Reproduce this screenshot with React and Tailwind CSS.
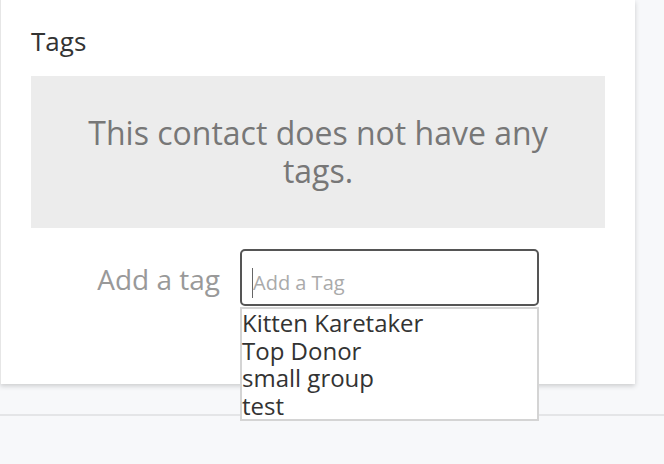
export default function App() {
  const tags = ['Kitten Karetaker', 'Top Donor', 'small group', 'test'];

  return (
    <div className="w-[664px] h-[464px] bg-[#f7f8fa] relative overflow-hidden font-['Open_Sans',sans-serif]">
      <div className="h-[414px]">
        <div className="w-[635px] h-[384px] bg-white border-l border-[#e6e6e6] shadow-[0_2px_5px_rgba(0,0,0,0.18)] px-[30px] pt-[24px]">
          <h3 className="text-[26px] leading-[34px] text-[#333]">Tags</h3>

          <div className="mt-[18px] h-[152px] bg-[#ececec] flex items-center justify-center px-10">
            <p className="text-center text-[32px] leading-[38px] text-[#777]">
              This contact does not have any tags.
            </p>
          </div>

          <div className="mt-[21px] flex items-center">
            <label className="w-[209px] text-right pr-[20px] pt-[3px] text-[28px] text-[#999]">Add a tag</label>
            <div className="relative">
              <div className="w-[299px] h-[57px] border-2 border-[#555] rounded-[5px] flex items-center pl-[10px] pt-[10px]">
                <span className="w-px h-[30px] bg-[#666]" />
                <span className="text-[20px] text-[#aaa]">Add a Tag</span>
              </div>
              <ul className="absolute left-0 top-[58px] w-[299px] border-2 border-[#d4d4d4] bg-white z-10">
                {tags.map((t) => (
                  <li key={t} className="text-[24px] leading-[27.5px] text-[#333]">
                    {t}
                  </li>
                ))}
              </ul>
            </div>
          </div>
        </div>
      </div>
      <div className="h-[2px] bg-[#e4e5e7]" />
    </div>
  );
}
